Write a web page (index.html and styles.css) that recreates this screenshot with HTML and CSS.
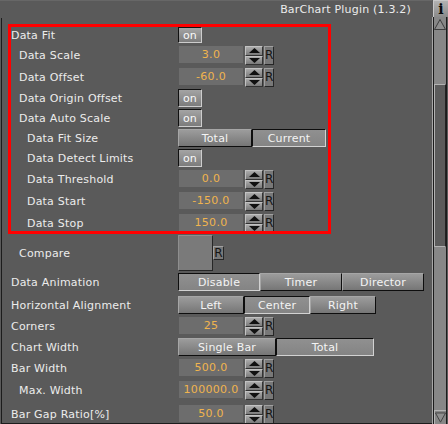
FILE: index.html
```html
<!DOCTYPE html>
<html>
<head>
<meta charset="utf-8">
<link rel="stylesheet" href="styles.css">
</head>
<body>
<div class="window">
  <div class="main">
    <div class="header"><span class="title">BarChart Plugin (1.3.2)</span></div>
    <div class="content">
      <div class="panel">
        <div class="group">
          <div class="row first">
            <div class="label">Data Fit</div>
            <div class="toggle">on</div>
          </div>
          <div class="row num">
            <div class="label i1">Data Scale</div>
            <div class="ctl"><div class="field">3.0</div><div class="spin"><div class="sp up"><svg width="11" height="5" viewBox="0 0 11 5"><polygon points="5.5,0 11,5 0,5" fill="#111"/></svg></div><div class="sp down"><svg width="11" height="5" viewBox="0 0 11 5"><polygon points="0,0 11,0 5.5,5" fill="#111"/></svg></div></div><div class="reset">R</div></div>
          </div>
          <div class="row num">
            <div class="label i1">Data Offset</div>
            <div class="ctl"><div class="field">-60.0</div><div class="spin"><div class="sp up"><svg width="11" height="5" viewBox="0 0 11 5"><polygon points="5.5,0 11,5 0,5" fill="#111"/></svg></div><div class="sp down"><svg width="11" height="5" viewBox="0 0 11 5"><polygon points="0,0 11,0 5.5,5" fill="#111"/></svg></div></div><div class="reset">R</div></div>
          </div>
          <div class="row tog">
            <div class="label i1">Data Origin Offset</div>
            <div class="toggle">on</div>
          </div>
          <div class="row tog">
            <div class="label i1">Data Auto Scale</div>
            <div class="toggle">on</div>
          </div>
          <div class="row tog">
            <div class="label i2">Data Fit Size</div>
            <div class="seg"><div class="btn w74">Total</div><div class="btn w74 on">Current</div></div>
          </div>
          <div class="row tog">
            <div class="label i2">Data Detect Limits</div>
            <div class="toggle">on</div>
          </div>
          <div class="row num">
            <div class="label i2">Data Threshold</div>
            <div class="ctl"><div class="field">0.0</div><div class="spin"><div class="sp up"><svg width="11" height="5" viewBox="0 0 11 5"><polygon points="5.5,0 11,5 0,5" fill="#111"/></svg></div><div class="sp down"><svg width="11" height="5" viewBox="0 0 11 5"><polygon points="0,0 11,0 5.5,5" fill="#111"/></svg></div></div><div class="reset">R</div></div>
          </div>
          <div class="row num">
            <div class="label i2">Data Start</div>
            <div class="ctl"><div class="field">-150.0</div><div class="spin"><div class="sp up"><svg width="11" height="5" viewBox="0 0 11 5"><polygon points="5.5,0 11,5 0,5" fill="#111"/></svg></div><div class="sp down"><svg width="11" height="5" viewBox="0 0 11 5"><polygon points="0,0 11,0 5.5,5" fill="#111"/></svg></div></div><div class="reset">R</div></div>
          </div>
          <div class="row num">
            <div class="label i2">Data Stop</div>
            <div class="ctl"><div class="field">150.0</div><div class="spin"><div class="sp up"><svg width="11" height="5" viewBox="0 0 11 5"><polygon points="5.5,0 11,5 0,5" fill="#111"/></svg></div><div class="sp down"><svg width="11" height="5" viewBox="0 0 11 5"><polygon points="0,0 11,0 5.5,5" fill="#111"/></svg></div></div><div class="reset">R</div></div>
          </div>
        </div>

        <div class="row out compare">
          <div class="label i1">Compare</div>
          <div class="ctl"><div class="cbox"></div><div class="reset small">R</div></div>
        </div>
        <div class="row out tog">
          <div class="label">Data Animation</div>
          <div class="seg"><div class="btn w82 on">Disable</div><div class="btn w82">Timer</div><div class="btn w82">Director</div></div>
        </div>
        <div class="row out tog mt3">
          <div class="label">Horizontal Alignment</div>
          <div class="seg"><div class="btn w66">Left</div><div class="btn w66 on">Center</div><div class="btn w66">Right</div></div>
        </div>
        <div class="row out num">
          <div class="label">Corners</div>
          <div class="ctl"><div class="field">25</div><div class="spin"><div class="sp up"><svg width="11" height="5" viewBox="0 0 11 5"><polygon points="5.5,0 11,5 0,5" fill="#111"/></svg></div><div class="sp down"><svg width="11" height="5" viewBox="0 0 11 5"><polygon points="0,0 11,0 5.5,5" fill="#111"/></svg></div></div><div class="reset">R</div></div>
        </div>
        <div class="row out tog">
          <div class="label">Chart Width</div>
          <div class="seg"><div class="btn w98">Single Bar</div><div class="btn w98 on">Total</div></div>
        </div>
        <div class="row out num">
          <div class="label">Bar Width</div>
          <div class="ctl"><div class="field">500.0</div><div class="spin"><div class="sp up"><svg width="11" height="5" viewBox="0 0 11 5"><polygon points="5.5,0 11,5 0,5" fill="#111"/></svg></div><div class="sp down"><svg width="11" height="5" viewBox="0 0 11 5"><polygon points="0,0 11,0 5.5,5" fill="#111"/></svg></div></div><div class="reset">R</div></div>
        </div>
        <div class="row out num">
          <div class="label i1">Max. Width</div>
          <div class="ctl"><div class="field">100000.0</div><div class="spin"><div class="sp up"><svg width="11" height="5" viewBox="0 0 11 5"><polygon points="5.5,0 11,5 0,5" fill="#111"/></svg></div><div class="sp down"><svg width="11" height="5" viewBox="0 0 11 5"><polygon points="0,0 11,0 5.5,5" fill="#111"/></svg></div></div><div class="reset">R</div></div>
        </div>
        <div class="row out num gapbar">
          <div class="label">Bar Gap Ratio[%]</div>
          <div class="ctl"><div class="field">50.0</div><div class="spin"><div class="sp up"><svg width="11" height="5" viewBox="0 0 11 5"><polygon points="5.5,0 11,5 0,5" fill="#111"/></svg></div><div class="sp down"><svg width="11" height="5" viewBox="0 0 11 5"><polygon points="0,0 11,0 5.5,5" fill="#111"/></svg></div></div><div class="reset">R</div></div>
        </div>
      </div>
    </div>
  </div>
  <div class="side">
    <div class="info">i</div>
    <div class="scrollbar">
      <div class="sb-inner">
        <div class="sb-arrow"><svg width="12" height="12" viewBox="0 0 12 12"><polygon points="6,1.5 11.5,11.5 0.5,11.5" fill="#8e8e8e" stroke="#3c3c3c" stroke-width="1"/></svg></div>
        <div class="sb-track top"></div>
        <div class="sb-thumb"></div>
        <div class="sb-track bottom"></div>
        <div class="sb-arrow down"><svg width="12" height="12" viewBox="0 0 12 12"><polygon points="0.5,0.5 11.5,0.5 6,10.5" fill="#8e8e8e" stroke="#3c3c3c" stroke-width="1"/></svg></div>
      </div>
    </div>
  </div>
</div>
</body>
</html>
```

FILE: styles.css
```css
* { box-sizing: border-box; }
html, body { margin: 0; padding: 0; }
body {
  background: #5a5a5a;
  font-family: "DejaVu Sans", Verdana, sans-serif;
  font-size: 11px;
  letter-spacing: 0.2px;
  color: #ececec;
}
.window {
  width: 448px;
  height: 424px;
  display: flex;
  overflow: hidden;
  background: #5a5a5a;
}
.main {
  width: 432px;
  flex: none;
  display: flex;
  flex-direction: column;
}
.header {
  height: 18px;
  border-top: 1px solid #676767;
  display: flex;
  align-items: center;
  justify-content: flex-end;
  padding-right: 21px;
  color: #ececec;
  white-space: nowrap;
}
.content {
  margin-left: 1px;
  border-left: 1px solid #1c1c1c;
  border-bottom: 1px solid #1c1c1c;
  height: 406px;
  padding: 6px 0 0 6px;
  overflow: hidden;
}
.panel {
  display: flex;
  flex-direction: column;
  gap: 2px;
}
.group {
  width: 323px;
  height: 210px;
  flex: none;
  border: 3px solid #ff0000;
  overflow: hidden;
  display: flex;
  flex-direction: column;
  gap: 2px;
}
.row {
  display: flex;
  align-items: center;
  flex: none;
}
.out { padding-left: 3px; }
.first { height: 16px; }
.tog { height: 18px; }
.num { height: 19px; margin-top: 1px; }
.mt3 { margin-top: 3px; }
.gapbar { margin-top: 3px; }
.compare { height: 36px; margin-top: -1px; }
.label {
  width: 167px;
  flex: none;
  white-space: nowrap;
  color: #ececec;
}
.i1 { padding-left: 8px; }
.i2 { padding-left: 16px; }

.toggle {
  width: 24px;
  height: 100%;
  border: 1px solid;
  border-color: #111 #cdcdcd #cdcdcd #111;
  background: linear-gradient(#a4a4a4, #7c7c7c);
  color: #fafafa;
  display: flex;
  align-items: center;
  justify-content: center;
}
.ctl {
  display: flex;
  align-items: flex-start;
  height: 100%;
}
.field {
  width: 64px;
  height: 17px;
  margin-left: 1px;
  background: #6d6d6d;
  color: #f0b44e;
  text-align: center;
  line-height: 17px;
  white-space: nowrap;
  letter-spacing: 0.3px;
}
.spin {
  width: 18px;
  height: 19px;
  margin-left: 2px;
  display: flex;
  flex-direction: column;
  background: #2a2a2a;
}
.sp {
  flex: 1;
  border: 1px solid;
  border-color: #c2c2c2 #333 #333 #c2c2c2;
  background: linear-gradient(#ababab, #7a7a7a);
  display: flex;
  align-items: center;
  justify-content: center;
}
.sp svg { display: block; }
.reset {
  width: 10px;
  height: 19px;
  margin-left: 1px;
  border: 1px solid;
  border-color: #a0a0a0 #262626 #262626 #a0a0a0;
  background: #787878;
  color: #141414;
  font-size: 12px;
  letter-spacing: 0;
  line-height: 17px;
  text-align: center;
  overflow: hidden;
}
.reset.small {
  width: 11px;
  height: 14px;
  margin-left: 0;
  margin-top: 11px;
  line-height: 12px;
}
.cbox {
  width: 35px;
  height: 36px;
  background: #7a7a7a;
  border: 1px solid;
  border-color: #8e8e8e #262626 #262626 #8e8e8e;
}
.seg {
  display: flex;
  height: 18px;
}
.btn {
  height: 18px;
  border: 1px solid;
  border-color: #a6a6a6 #0e0e0e #0e0e0e #a6a6a6;
  background: linear-gradient(#9c9c9c, #767676);
  color: #f4f4f4;
  display: flex;
  align-items: center;
  justify-content: center;
  white-space: nowrap;
}
.btn.on {
  border-color: #0e0e0e #d2d2d2 #d2d2d2 #0e0e0e;
  background: linear-gradient(#909090, #848484);
}
.w74 { width: 74px; }
.w82 { width: 82px; }
.w66 { width: 66px; }
.w98 { width: 98px; }

.side {
  width: 16px;
  flex: none;
  display: flex;
  flex-direction: column;
}
.info {
  margin-left: 1px;
  width: 15px;
  height: 17px;
  border-top: 1px solid #c8c8c8;
  border-left: 1px solid #c8c8c8;
  background: linear-gradient(#b2b2b2, #8a8a8a);
  color: #0a0a0a;
  font-family: "DejaVu Serif", "Liberation Serif", serif;
  font-weight: bold;
  font-size: 14px;
  letter-spacing: 0;
  line-height: 16px;
  text-align: center;
}
.scrollbar {
  flex: 1;
  border-left: 1px solid #a8a8a8;
  display: flex;
}
.sb-inner {
  width: 14px;
  border-left: 1px solid #1c1c1c;
  border-right: 1px solid #1c1c1c;
  background: #878787;
  display: flex;
  flex-direction: column;
}
.sb-arrow {
  height: 14px;
  display: flex;
  align-items: center;
  justify-content: center;
  flex: none;
}
.sb-arrow svg { display: block; }
.sb-arrow.down {
  border-top: 1px solid #b4b4b4;
  border-left: 1px solid #b4b4b4;
}
.sb-track.top { height: 53px; flex: none; }
.sb-track.bottom { flex: 1; }
.sb-thumb {
  height: 163px;
  flex: none;
  background: #5b5b5b;
  border: 1px solid;
  border-color: #b2b2b2 #222 #b2b2b2 #b2b2b2;
}
```
